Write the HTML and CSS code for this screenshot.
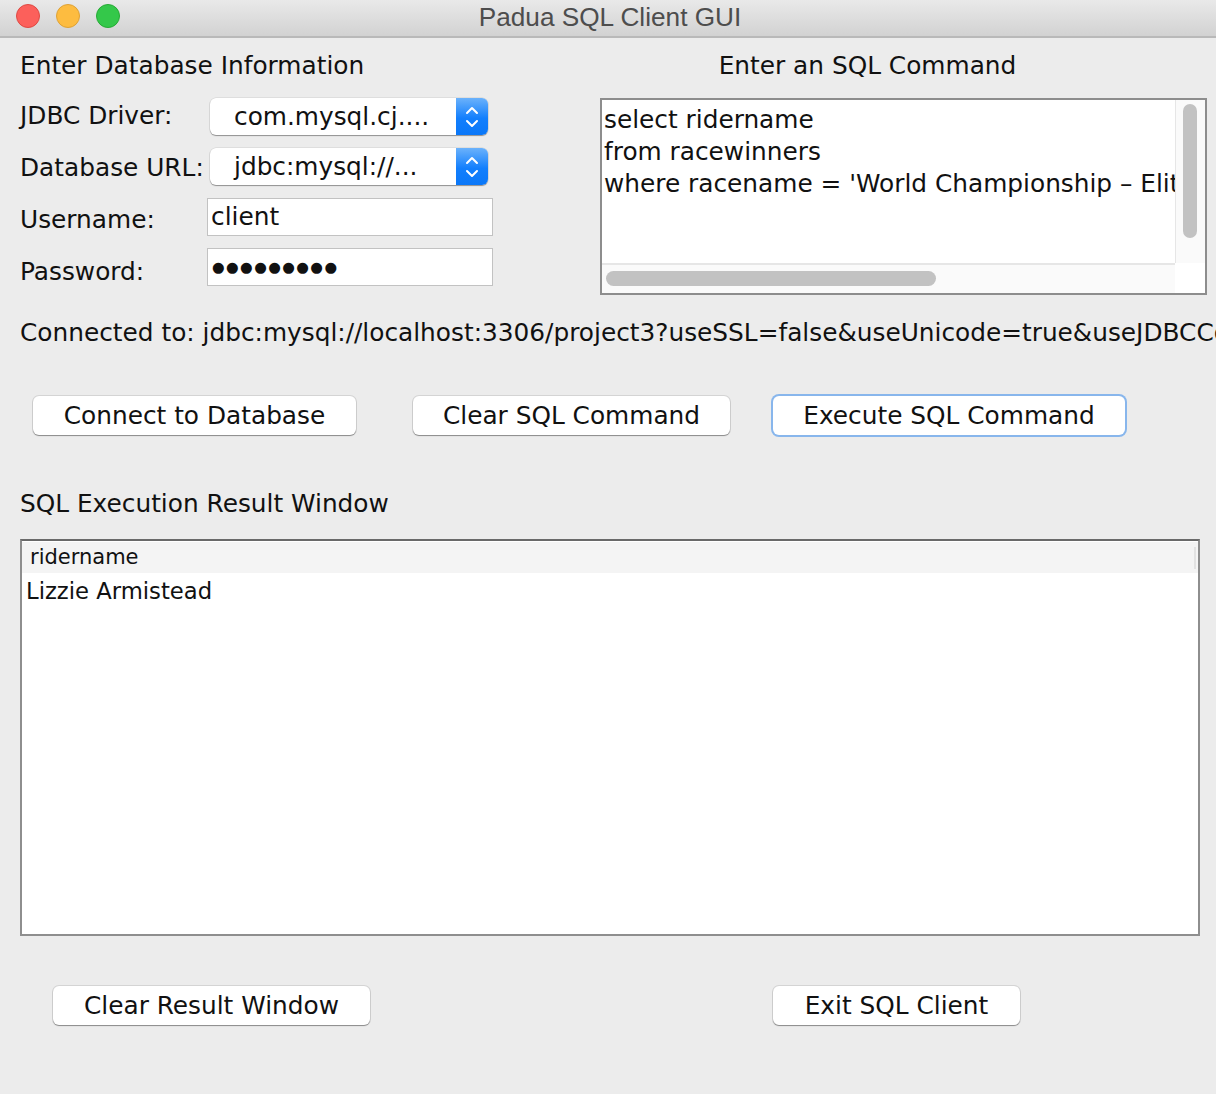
FILE: index.html
```html
<!DOCTYPE html>
<html>
<head>
<meta charset="utf-8">
<title>Padua SQL Client GUI</title>
<link rel="stylesheet" href="styles.css">
</head>
<body>
<div class="window">
  <div class="titlebar">
    <div class="lights">
      <span class="light red"></span>
      <span class="light yellow"></span>
      <span class="light green"></span>
    </div>
    <div class="title">Padua SQL Client GUI</div>
  </div>
  <div class="content">
    <div class="top">
      <div class="db-panel">
        <div class="heading">Enter Database Information</div>
        <div class="form">
          <div class="label l1">JDBC Driver:</div>
          <div class="combo">
            <span class="combo-text">com.mysql.cj....</span>
            <span class="combo-arrow">
              <svg width="16" height="26" viewBox="0 0 16 26"><path d="M3 9 L8 4 L13 9 M3 17 L8 22 L13 17" fill="none" stroke="#fff" stroke-width="2" stroke-linecap="round" stroke-linejoin="round"/></svg>
            </span>
          </div>
          <div class="label l2">Database URL:</div>
          <div class="combo">
            <span class="combo-text">jdbc:mysql://...</span>
            <span class="combo-arrow">
              <svg width="16" height="26" viewBox="0 0 16 26"><path d="M3 9 L8 4 L13 9 M3 17 L8 22 L13 17" fill="none" stroke="#fff" stroke-width="2" stroke-linecap="round" stroke-linejoin="round"/></svg>
            </span>
          </div>
          <div class="label l3">Username:</div>
          <div class="field">client</div>
          <div class="label l4">Password:</div>
          <div class="field dots">●●●●●●●●●</div>
        </div>
      </div>
      <div class="sql-panel">
        <div class="heading centered">Enter an SQL Command</div>
        <div class="sql-box">
          <div class="sql-text">select ridername<br>from racewinners<br>where racename = 'World Championship – Elite Women Road Race'</div>
          <div class="vscroll"><div class="vthumb"></div></div>
          <div class="hscroll"><div class="hthumb"></div></div>
          <div class="corner"></div>
        </div>
      </div>
    </div>
    <div class="status">Connected to: jdbc:mysql://localhost:3306/project3?useSSL=false&amp;useUnicode=true&amp;useJDBCCompliantTimezoneShift=true</div>
    <div class="btn-row">
      <div class="btn btn-connect">Connect to Database</div>
      <div class="btn btn-clear">Clear SQL Command</div>
      <div class="btn btn-exec focused">Execute SQL Command</div>
    </div>
    <div class="heading result-heading">SQL Execution Result Window</div>
    <div class="result">
      <div class="thead"><span>ridername</span><span class="thead-bar"></span></div>
      <div class="trow">Lizzie Armistead</div>
    </div>
    <div class="bottom-row">
      <div class="btn btn-clear-result">Clear Result Window</div>
      <div class="btn btn-exit">Exit SQL Client</div>
    </div>
  </div>
</div>
</body>
</html>
```
FILE: styles.css
```css
html, body {
  margin: 0;
  padding: 0;
  background: #ececec;
}
.window {
  width: 1216px;
  height: 1094px;
  overflow: hidden;
  background: #ececec;
  font-family: "DejaVu Sans", "Lucida Grande", sans-serif;
  color: #111;
}
.titlebar {
  height: 36px;
  border-bottom: 2px solid #b9b9b9;
  background: linear-gradient(#e9e9e9, #d2d2d2);
  position: relative;
}
.lights {
  display: flex;
  gap: 16px;
  padding-left: 16px;
  padding-top: 4px;
}
.light {
  width: 24px;
  height: 24px;
  border-radius: 50%;
  box-sizing: border-box;
}
.red { background: #fc605b; border: 1px solid #de4a43; }
.yellow { background: #fdbc40; border: 1px solid #dea236; }
.green { background: #34c84a; border: 1px solid #27aa35; }
.title {
  position: absolute;
  left: 0;
  right: 0;
  top: 0;
  height: 34px;
  line-height: 34px;
  text-align: center;
  font-family: "Liberation Sans", Arial, sans-serif;
  font-size: 26.2px;
  color: #4d4d4d;
  padding-left: 4px;
}
.content {
  padding: 0 0 0 20px;
}
.top {
  display: flex;
  padding-top: 13px;
}
.db-panel {
  width: 580px;
}
.heading {
  font-size: 24.8px;
  line-height: 30px;
  height: 30px;
  white-space: nowrap;
}
.centered {
  text-align: center;
}
.form {
  display: grid;
  grid-template-columns: 187px 286px;
  grid-auto-rows: 37px;
  row-gap: 13px;
  margin-top: 17px;
}
.label {
  font-size: 24.8px;
  line-height: 30px;
  white-space: nowrap;
}
.l1 { padding-top: 3px; }
.l2 { padding-top: 5px; }
.l3 { padding-top: 7px; }
.l4 { padding-top: 9px; }
.combo {
  margin-left: 3px;
  width: 278px;
  height: 37px;
  box-sizing: border-box;
  background: #fff;
  border-radius: 6px;
  box-shadow: 0 1px 1px rgba(0,0,0,0.35), 0 0 0 0.5px rgba(0,0,0,0.12);
  display: flex;
  overflow: hidden;
}
.combo-text {
  flex: 1;
  font-size: 24.8px;
  line-height: 37px;
  padding-left: 24px;
  white-space: nowrap;
}
.combo-arrow {
  width: 32px;
  background: linear-gradient(#6bb2fb, #127ffd 55%, #0a77f8);
  display: flex;
  align-items: center;
  justify-content: center;
}
.field {
  width: 286px;
  height: 38px;
  box-sizing: border-box;
  background: #fff;
  border: 1px solid #c2c2c2;
  font-size: 24.8px;
  line-height: 36px;
  padding-left: 3px;
  white-space: nowrap;
}
.dots {
  font-size: 14.5px;
  letter-spacing: 1.4px;
  padding-left: 4px;
}
.sql-panel {
  width: 607px;
}
.sql-panel .heading {
  padding-right: 72px;
}
.sql-box {
  margin-top: 17px;
  height: 197px;
  box-sizing: border-box;
  border: 2px solid #8d8d8d;
  background: #fff;
  display: grid;
  grid-template-columns: 1fr 30px;
  grid-template-rows: 1fr 30px;
  overflow: hidden;
}
.sql-text {
  font-size: 24.8px;
  line-height: 32px;
  padding: 4px 0 0 2px;
  white-space: nowrap;
  overflow: hidden;
}
.vscroll {
  background: #fafafa;
  border-left: 1px solid #e6e6e6;
  position: relative;
}
.vthumb {
  position: absolute;
  left: 7px;
  top: 4px;
  width: 14px;
  height: 134px;
  border-radius: 7px;
  background: #c2c2c2;
}
.hscroll {
  background: #fafafa;
  border-top: 2px solid #e6e6e6;
  position: relative;
}
.hthumb {
  position: absolute;
  left: 4px;
  top: 6px;
  width: 330px;
  height: 15px;
  border-radius: 8px;
  background: #c2c2c2;
}
.corner {
  background: #fff;
}
.status {
  margin-top: 23px;
  font-size: 24.8px;
  line-height: 30px;
  white-space: nowrap;
  overflow: hidden;
}
.btn-row {
  display: flex;
  margin-top: 48px;
  padding-left: 13px;
}
.btn {
  height: 39px;
  box-sizing: border-box;
  background: #fff;
  border-radius: 6px;
  box-shadow: 0 1px 1px rgba(0,0,0,0.35), 0 0 0 1px rgba(0,0,0,0.10);
  font-size: 24.8px;
  line-height: 39px;
  text-align: center;
  white-space: nowrap;
}
.btn-connect { width: 323px; }
.btn-clear { width: 317px; margin-left: 57px; }
.btn-exec { width: 352px; margin-left: 43px; }
.focused {
  box-shadow: 0 0 0 2px #88b6ec;
}
.result-heading {
  margin-top: 54px;
}
.result {
  margin-top: 20px;
  width: 1180px;
  height: 397px;
  box-sizing: border-box;
  border: 2px solid #8e8e8e;
  border-top-color: #696969;
  background: #fff;
}
.thead {
  height: 31px;
  margin-top: 1px;
  background: #f4f4f4;
  font-size: 21px;
  line-height: 31px;
  padding-left: 8px;
  position: relative;
}
.thead-bar {
  position: absolute;
  right: 2px;
  top: 5px;
  width: 2px;
  height: 22px;
  background: #e2e2e2;
}
.trow {
  font-size: 22.7px;
  line-height: 36px;
  padding-left: 4px;
  white-space: nowrap;
}
.bottom-row {
  display: flex;
  margin-top: 50px;
  padding-left: 33px;
}
.btn-clear-result { width: 317px; }
.btn-exit { width: 247px; margin-left: 403px; }
```
